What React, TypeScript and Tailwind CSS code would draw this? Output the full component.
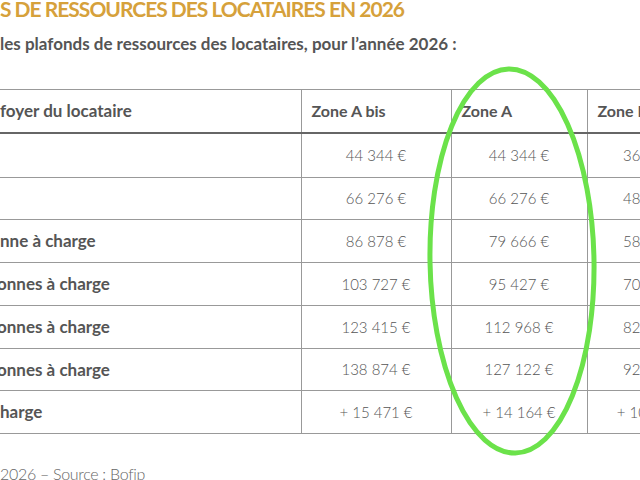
import React from "react";

const rows: { label: string; cls: string; h: string; a: string; b: string; c: string }[] = [
  { label: "", cls: "", h: "h-[45px]", a: "44 344 €", b: "44 344 €", c: "36 193 €" },
  { label: "", cls: "", h: "h-[42px]", a: "66 276 €", b: "66 276 €", c: "48 332 €" },
  { label: "nne à charge", cls: "ml-0", h: "h-[43px]", a: "86 878 €", b: "79 666 €", c: "58 141 €" },
  { label: "onnes à charge", cls: "-ml-[3px]", h: "h-[43px]", a: "103 727 €", b: "95 427 €", c: "70 188 €" },
  { label: "onnes à charge", cls: "-ml-[3px]", h: "h-[43px]", a: "123 415 €", b: "112 968 €", c: "82 820 €" },
  { label: "onnes à charge", cls: "-ml-[3px]", h: "h-[42px]", a: "138 874 €", b: "127 122 €", c: "92 614 €" },
  { label: "harge", cls: "ml-0", h: "h-[43px]", a: "+ 15 471 €", b: "+ 14 164 €", c: "+ 10 314 €" },
];

export default function App() {
  return (
    <div
      className="relative w-[640px] h-[480px] overflow-hidden bg-white"
      style={{ fontFamily: "Lato, 'Noto Sans', sans-serif" }}
    >
      <div className="text-[21px] leading-[20px] font-bold text-[#d6a13b] whitespace-nowrap -mt-[1px] tracking-[-1px]">
        S DE RESSOURCES DES LOCATAIRES EN 2026
      </div>
      <div className="mt-[15px] text-[17px] leading-[20px] font-bold text-[#555] whitespace-nowrap">
        les plafonds de ressources des locataires, pour l’année 2026 :
      </div>
      <table className="mt-[35px] border-collapse table-fixed w-[719px] text-[15px] text-[#555]">
        <colgroup>
          <col className="w-[301px]" />
          <col className="w-[150px]" />
          <col className="w-[136px]" />
          <col className="w-[132px]" />
        </colgroup>
        <thead>
          <tr className="h-[43px] border-t border-[#999] border-b-2 border-b-[#666]">
            <th className="text-left text-[17px] font-bold p-0 whitespace-nowrap">foyer du locataire</th>
            <th className="text-left text-[16px] font-bold pl-[10px] border-l border-[#999]">Zone A bis</th>
            <th className="text-left text-[16px] font-bold pl-[10px] border-l border-[#999]">Zone A</th>
            <th className="text-left text-[16px] font-bold pl-[10px] border-l border-[#999] whitespace-nowrap">Zone B1</th>
          </tr>
        </thead>
        <tbody>
          {rows.map((r, i) => (
            <tr key={i} className={r.h + " border-b border-[#999]"}>
              <td className="p-0 text-[17px] font-bold whitespace-nowrap overflow-hidden">
                <span className={"inline-block " + r.cls}>{r.label}</span>
              </td>
              <td className="text-center font-light text-[#555] border-l border-[#999]">{r.a}</td>
              <td className="text-center font-light text-[#555] border-l border-[#999]">{r.b}</td>
              <td className="text-center font-light text-[#555] border-l border-[#999]">{r.c}</td>
            </tr>
          ))}
        </tbody>
      </table>
      <div className="mt-[30px] text-[16px] leading-[20px] font-light text-[#666] whitespace-nowrap tracking-[-0.3px]">
        2026 – Source : Bofip
      </div>
      <svg
        className="absolute left-[420px] top-[60px] w-[185px] h-[405px] pointer-events-none"
        viewBox="0 0 185 405"
      >
        <ellipse
          cx="92"
          cy="201"
          rx="82"
          ry="192"
          fill="none"
          stroke="#6be24a"
          strokeWidth="5"
          transform="rotate(-1 92 201)"
        />
      </svg>
    </div>
  );
}
